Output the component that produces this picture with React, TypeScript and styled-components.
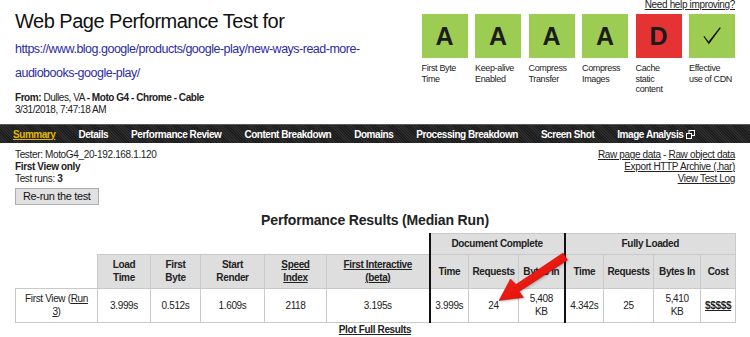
import React from "react";
import styled, { createGlobalStyle } from "styled-components";

const GlobalStyle = createGlobalStyle`
  html, body { margin: 0; padding: 0; background: #fff; }
  body {
    font-family: "Liberation Sans", Arial, Helvetica, sans-serif;
    font-size: 10px;
    color: #222;
    letter-spacing: -0.35px;
  }
`;

const Page = styled.div`
  position: relative;
  width: 750px;
  height: 337px;
  overflow: hidden;
  background: #fff;
`;

const Header = styled.header`
  display: flex;
  justify-content: space-between;
  align-items: flex-start;
`;

const HeaderLeft = styled.div`
  padding: 9px 0 9px 15px;
`;

const Title = styled.h1`
  margin: 0;
  font-size: 20px;
  font-weight: normal;
  line-height: 24px;
  letter-spacing: -0.5px;
  color: #111;
`;

const UrlLink = styled.a`
  display: block;
  margin-top: 4px;
  font-size: 12.5px;
  line-height: 24px;
  letter-spacing: -0.5px;
  color: #2b2ba6;
  text-decoration: none;
  white-space: nowrap;
`;

const Meta = styled.div`
  margin-top: 7px;
  font-size: 10px;
  line-height: 11.5px;
  letter-spacing: -0.45px;
  color: #222;
`;

const GradesPanel = styled.div`
  display: flex;
  flex-direction: column;
  align-items: flex-end;
  padding-right: 15px;
`;

const HelpLink = styled.a`
  font-size: 10px;
  line-height: 10px;
  color: #222;
  text-decoration: underline;
`;

const GradeRow = styled.div`
  display: flex;
  gap: 7.5px;
  margin-top: 4px;
`;

const Grade = styled.div`
  width: 46px;
  display: flex;
  flex-direction: column;
`;

const GradeBox = styled.div<{ $bg: string }>`
  height: 44px;
  background: ${(p) => p.$bg};
  display: flex;
  align-items: center;
  justify-content: center;
  font-size: 25px;
  font-weight: bold;
  letter-spacing: 0;
  color: #1c1c1c;
`;

const GradeLabel = styled.div`
  margin-top: 5px;
  font-size: 9px;
  line-height: 10.5px;
  white-space: nowrap;
  color: #222;
`;

const NavBar = styled.nav`
  height: 18px;
  display: flex;
  align-items: center;
  padding-left: 1.5px;
  background-color: #242424;
  background-image: repeating-linear-gradient(45deg, #2e2e2e 0 1px, #1c1c1c 1px 2px);
  border-top: 1px solid #5a5a5a;
`;

const NavItem = styled.a<{ $active?: boolean }>`
  display: inline-flex;
  align-items: center;
  gap: 3px;
  padding: 0 11.5px;
  font-size: 10px;
  font-weight: bold;
  letter-spacing: -0.45px;
  color: ${(p) => (p.$active ? "#e2b900" : "#fff")};
  text-decoration: ${(p) => (p.$active ? "underline" : "none")};
  white-space: nowrap;
`;

const InfoSection = styled.section`
  display: flex;
  justify-content: space-between;
  padding: 6px 15px 0;
`;

const InfoLeft = styled.div`
  font-size: 10px;
  line-height: 12px;
`;

const InfoRight = styled.div`
  font-size: 10px;
  line-height: 12px;
  text-align: right;
`;

const InfoLink = styled.a`
  color: #222;
  text-decoration: underline;
`;

const RerunButton = styled.button`
  margin-top: 2.5px;
  height: 17px;
  padding: 0 7px;
  font-family: inherit;
  font-size: 11px;
  letter-spacing: -0.35px;
  color: #111;
  background: #e1e1e1;
  border: 1px solid #adadad;
  border-radius: 0;
`;

const ResultsTitle = styled.h2`
  margin: 7px 0 0;
  font-size: 14px;
  line-height: 16px;
  font-weight: bold;
  text-align: center;
  letter-spacing: -0.15px;
  color: #222;
`;

const Table = styled.table`
  width: 720px;
  margin: 5px 0 0 15px;
  border-collapse: collapse;
  table-layout: fixed;
  font-size: 10px;
`;

const Col = styled.col<{ $w: number }>`
  width: ${(p) => p.$w}px;
`;

const GroupRow = styled.tr`
  height: 21px;
`;

const LabelRow = styled.tr`
  height: 34px;
`;

const ValueRow = styled.tr`
  height: 34px;
`;

const Blank = styled.td`
  border: none;
  padding: 0;
`;

const HeadCell = styled.th<{ $split?: boolean }>`
  background: #dedede;
  border: 1px solid #c9c9c9;
  ${(p) => (p.$split ? "border-left: 2px solid #111;" : "")}
  padding: 0 3px;
  font-weight: bold;
  text-align: center;
  vertical-align: middle;
  line-height: 13px;
  white-space: nowrap;
  color: #222;
`;

const Cell = styled.td<{ $split?: boolean }>`
  background: #fff;
  border: 1px solid #c9c9c9;
  ${(p) => (p.$split ? "border-left: 2px solid #111;" : "")}
  padding: 0 3px;
  text-align: center;
  vertical-align: middle;
  line-height: 13px;
  white-space: nowrap;
  color: #222;
`;

const TableLink = styled.a<{ $bold?: boolean }>`
  color: #222;
  text-decoration: underline;
  font-weight: ${(p) => (p.$bold ? "bold" : "inherit")};
`;

const PlotLink = styled.a`
  display: block;
  margin-top: 1.5px;
  font-size: 10px;
  line-height: 12px;
  font-weight: bold;
  text-align: center;
  color: #222;
  text-decoration: underline;
`;

const ArrowLayer = styled.svg`
  position: absolute;
  left: 0;
  top: 0;
  width: 750px;
  height: 337px;
  pointer-events: none;
`;

const grades = [
  { g: "A", bg: "#9ccd52", label: ["First Byte", "Time"] },
  { g: "A", bg: "#9ccd52", label: ["Keep-alive", "Enabled"] },
  { g: "A", bg: "#9ccd52", label: ["Compress", "Transfer"] },
  { g: "A", bg: "#9ccd52", label: ["Compress", "Images"] },
  { g: "D", bg: "#e53232", label: ["Cache", "static", "content"] },
  { g: "check", bg: "#9ccd52", label: ["Effective", "use of CDN"] },
];

const navItems = [
  "Summary",
  "Details",
  "Performance Review",
  "Content Breakdown",
  "Domains",
  "Processing Breakdown",
  "Screen Shot",
];

const colWidths = [82, 53, 50, 64, 62, 103, 39, 50, 46, 39, 50, 47, 35];

const CheckMark = () => (
  <svg width="18" height="18" viewBox="0 0 18 18">
    <path d="M0.4 9.6 L1.3 8.9 L5.6 14.6 L16.8 0.3 L17.8 1.1 L5.9 17.3 Z" fill="#111" />
  </svg>
);

const ExternalIcon = () => (
  <svg width="9" height="9" viewBox="0 0 9 9">
    <rect x="3" y="0.5" width="5.5" height="5" fill="none" stroke="#fff" strokeWidth="1" />
    <rect x="0.5" y="3.5" width="5" height="5" fill="#222" stroke="#fff" strokeWidth="1" />
  </svg>
);

export default function App() {
  return (
    <Page>
      <GlobalStyle />
      <Header>
        <HeaderLeft>
          <Title>Web Page Performance Test for</Title>
          <UrlLink href="#">
            https://www.blog.google/products/google-play/new-ways-read-more-
            <br />
            audiobooks-google-play/
          </UrlLink>
          <Meta>
            <b>From:</b> Dulles, VA <b>- Moto G4 - Chrome - Cable</b>
            <br />
            3/31/2018, 7:47:18 AM
          </Meta>
        </HeaderLeft>
        <GradesPanel>
          <HelpLink href="#">Need help improving?</HelpLink>
          <GradeRow>
            {grades.map((item, i) => (
              <Grade key={i}>
                <GradeBox $bg={item.bg}>{item.g === "check" ? <CheckMark /> : item.g}</GradeBox>
                <GradeLabel>
                  {item.label.map((l, j) => (
                    <div key={j}>{l}</div>
                  ))}
                </GradeLabel>
              </Grade>
            ))}
          </GradeRow>
        </GradesPanel>
      </Header>

      <NavBar>
        {navItems.map((n, i) => (
          <NavItem key={n} href="#" $active={i === 0}>
            {n}
          </NavItem>
        ))}
        <NavItem href="#">
          Image Analysis
          <ExternalIcon />
        </NavItem>
      </NavBar>

      <InfoSection>
        <InfoLeft>
          <div>Tester: MotoG4_20-192.168.1.120</div>
          <div>
            <b>First View only</b>
          </div>
          <div>
            Test runs: <b>3</b>
          </div>
          <RerunButton>Re-run the test</RerunButton>
        </InfoLeft>
        <InfoRight>
          <div>
            <InfoLink href="#">Raw page data</InfoLink> - <InfoLink href="#">Raw object data</InfoLink>
          </div>
          <div>
            <InfoLink href="#">Export HTTP Archive (.har)</InfoLink>
          </div>
          <div>
            <InfoLink href="#">View Test Log</InfoLink>
          </div>
        </InfoRight>
      </InfoSection>

      <ResultsTitle>Performance Results (Median Run)</ResultsTitle>

      <Table>
        <colgroup>
          {colWidths.map((w, i) => (
            <Col key={i} $w={w} />
          ))}
        </colgroup>
        <thead>
          <GroupRow>
            <Blank colSpan={6} />
            <HeadCell colSpan={3} $split>
              Document Complete
            </HeadCell>
            <HeadCell colSpan={4} $split>
              Fully Loaded
            </HeadCell>
          </GroupRow>
          <LabelRow>
            <Blank />
            <HeadCell>
              Load
              <br />
              Time
            </HeadCell>
            <HeadCell>
              First
              <br />
              Byte
            </HeadCell>
            <HeadCell>
              Start
              <br />
              Render
            </HeadCell>
            <HeadCell>
              <TableLink href="#">
                Speed
                <br />
                Index
              </TableLink>
            </HeadCell>
            <HeadCell>
              <TableLink href="#">
                First Interactive
                <br />
                (beta)
              </TableLink>
            </HeadCell>
            <HeadCell $split>Time</HeadCell>
            <HeadCell>Requests</HeadCell>
            <HeadCell>Bytes In</HeadCell>
            <HeadCell $split>Time</HeadCell>
            <HeadCell>Requests</HeadCell>
            <HeadCell>Bytes In</HeadCell>
            <HeadCell>Cost</HeadCell>
          </LabelRow>
        </thead>
        <tbody>
          <ValueRow>
            <Cell>
              First View (<TableLink href="#">Run</TableLink>
              <br />
              <TableLink href="#">3</TableLink>)
            </Cell>
            <Cell>3.999s</Cell>
            <Cell>0.512s</Cell>
            <Cell>1.609s</Cell>
            <Cell>2118</Cell>
            <Cell>3.195s</Cell>
            <Cell $split>3.999s</Cell>
            <Cell>24</Cell>
            <Cell>
              5,408
              <br />
              KB
            </Cell>
            <Cell $split>4.342s</Cell>
            <Cell>25</Cell>
            <Cell>
              5,410
              <br />
              KB
            </Cell>
            <Cell>
              <TableLink href="#" $bold>
                $$$$$
              </TableLink>
            </Cell>
          </ValueRow>
        </tbody>
      </Table>
      <PlotLink href="#">Plot Full Results</PlotLink>

      <ArrowLayer viewBox="0 0 750 337">
        <defs>
          <linearGradient id="arrowRed" x1="0" y1="0" x2="1" y2="1">
            <stop offset="0" stopColor="#ff2a1a" />
            <stop offset="1" stopColor="#d40808" />
          </linearGradient>
        </defs>
        <polygon
          points="563,253 516,284.5 510.5,279 499,300.5 523.5,297.5 519.2,291.5 567.5,260"
          fill="url(#arrowRed)"
          stroke="#c00000"
          strokeWidth="0.5"
          strokeLinejoin="round"
          style={{ filter: "drop-shadow(1px 1px 1px rgba(0,0,0,0.25))" }}
        />
      </ArrowLayer>
    </Page>
  );
}
